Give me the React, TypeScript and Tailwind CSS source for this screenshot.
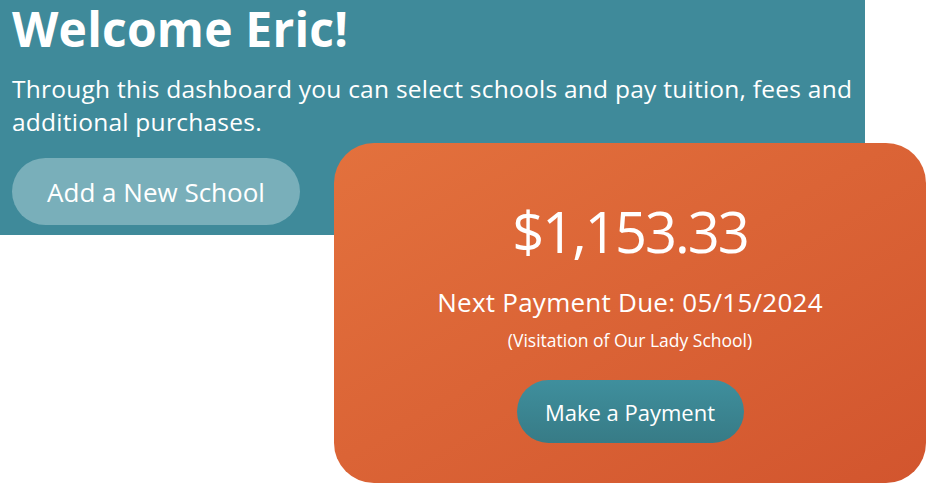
import React from "react";

export default function App() {
  return (
    <div className="relative w-[926px] h-[483px] bg-white font-['Open_Sans','Noto_Sans',sans-serif] text-white">
      <section className="w-[865px] h-[235px] bg-[#3f8a9a] pl-3 pt-[2px]">
        <h1 className="text-[48px] font-bold leading-[54px] tracking-[0.2px]">Welcome Eric!</h1>
        <p className="mt-[16px] text-[24.5px] leading-[33px] w-[853px] tracking-[0.25px]">
          Through this dashboard you can select schools and pay tuition, fees and additional purchases.
        </p>
        <button className="mt-[20px] w-[288px] h-[67px] rounded-full bg-[#79afba] text-[26px] leading-none">
          Add a New School
        </button>
      </section>

      <div className="absolute left-[334px] top-[143px] w-[592px] h-[340px] rounded-[40px] bg-gradient-to-br from-[#e3713d] to-[#d2552e] flex flex-col items-center pt-[53px]">
        <div className="text-[56px] leading-[70px] tracking-[-2px]">$1,153.33</div>
        <div className="mt-[20px] text-[26px] leading-[32px] tracking-[0.25px]">Next Payment Due: 05/15/2024</div>
        <div className="mt-[10px] text-[17.5px] leading-[24px]">(Visitation of Our Lady School)</div>
        <button className="mt-[28px] w-[227px] h-[63px] rounded-full bg-gradient-to-b from-[#3f8f9d] to-[#377b86] text-[22px] leading-none">
          Make a Payment
        </button>
      </div>
    </div>
  );
}
